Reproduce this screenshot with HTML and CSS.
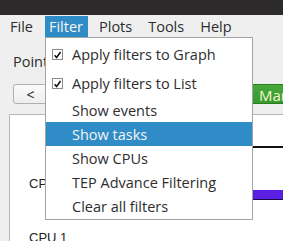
FILE: index.html
```html
<!DOCTYPE html>
<html lang="en">
<head>
    <meta charset="UTF-8">
    <meta name="viewport" content="width=device-width, initial-scale=1.0">
    <title>Trace Viewer</title>
    <link rel="stylesheet" href="styles.css">
</head>
<body>
    <div class="titlebar"></div>

    <nav class="menubar">
        <span class="menu-item">File</span>
        <span class="menu-item active">Filter</span>
        <span class="menu-item">Plots</span>
        <span class="menu-item">Tools</span>
        <span class="menu-item">Help</span>
    </nav>

    <main class="window">
        <div class="point-row">Pointer: none</div>

        <div class="button-row">
            <button class="btn btn-small">&lt;</button>
            <button class="btn">&gt;</button>
            <button class="btn btn-green">Marker A</button>
        </div>

        <div class="graph">
            <div class="axis"></div>
            <div class="lane">
                <span class="lane-label">CPU 0</span>
                <div class="lane-bar"></div>
            </div>
            <div class="lane">
                <span class="lane-label">CPU 1</span>
            </div>
        </div>
    </main>

    <!-- open Filter menu -->
    <ul class="dropdown">
        <li class="check-item">
            <span class="checkbox">
                <svg width="10" height="10" viewBox="0 0 10 10"><path d="M1.8 5.2 L4 7.8 L8.4 1.6" fill="none" stroke="#111" stroke-width="1.7"/></svg>
            </span>
            Apply filters to Graph
        </li>
        <li class="check-item">
            <span class="checkbox">
                <svg width="10" height="10" viewBox="0 0 10 10"><path d="M1.8 5.2 L4 7.8 L8.4 1.6" fill="none" stroke="#111" stroke-width="1.7"/></svg>
            </span>
            Apply filters to List
        </li>
        <li>Show events</li>
        <li class="selected">Show tasks</li>
        <li>Show CPUs</li>
        <li>TEP Advance Filtering</li>
        <li>Clear all filters</li>
    </ul>
</body>
</html>
```

FILE: styles.css
```css
body {
    margin: 0;
    width: 283px;
    height: 241px;
    overflow: hidden;
    position: relative;
    background: #efefef;
    font-family: "Open Sans", sans-serif;
    font-size: 14.5px;
    color: #2d2d2d;
}

.titlebar {
    height: 15px;
    background: #2c2a2a;
}

.menubar {
    display: flex;
    height: 24px;
    padding-left: 6px;
    gap: 7px;
}

.menu-item {
    display: flex;
    align-items: center;
    height: 21px;
    margin-top: 1px;
    padding: 0 5px 0 4px;
}

.menu-item.active {
    background: #308cc6;
    color: #f4f4f4;
}

.window {
    padding-left: 9px;
}

.point-row {
    height: 45px;
    display: flex;
    align-items: center;
    padding-left: 4px;
    white-space: nowrap;
}

.button-row {
    display: flex;
    gap: 6px;
    padding-left: 4px;
    margin-bottom: 10px;
    overflow: hidden;
}

.btn {
    flex-shrink: 0;
    height: 20px;
    width: 60px;
    padding: 0;
    border: 1px solid #b0b0b0;
    border-radius: 3px;
    background: linear-gradient(#fafafa, #eeeeee);
    font-family: "Open Sans", sans-serif;
    font-size: 14px;
    color: #222;
}

.btn-small {
    width: 35px;
}

.btn-green {
    width: 100px;
    margin-left: 129px;
    text-align: left;
    padding-left: 9px;
    font-size: 15px;
    background: linear-gradient(#46a83a, #369a2c);
    border-color: #2a7d22;
    color: #f6f4d2;
}

.graph {
    height: 130px;
    background: #ffffff;
    border-top: 1px solid #b8b8b8;
    border-left: 1px solid #b8b8b8;
    padding-left: 19px;
}

.axis {
    margin-top: 31px;
    margin-left: 60px;
    height: 2px;
    background: #111;
}

.lane {
    display: flex;
    align-items: center;
    height: 54px;
    position: relative;
}

.axis + .lane {
    margin-top: 8px;
}

.lane-label {
    font-family: "Liberation Sans", Arial, sans-serif;
    font-size: 13px;
    color: #222;
    width: 60px;
}

.lane-bar {
    position: absolute;
    left: 160px;
    right: -20px;
    bottom: 10px;
    height: 9px;
    background: #5a1fe3;
    border-bottom: 1px solid #1a0a40;
}

.dropdown {
    position: absolute;
    left: 45px;
    top: 37px;
    width: 206px;
    margin: 0;
    padding: 2px 0 1px;
    list-style: none;
    background: #ffffff;
    border: 1px solid #a4a4a4;
}

.dropdown li {
    display: flex;
    align-items: center;
    height: 24px;
    padding-left: 26px;
    white-space: nowrap;
}

.dropdown li.check-item {
    height: 29px;
    padding-left: 6px;
}

.dropdown li.selected {
    background: #308cc6;
    color: #f4f4f4;
}

.checkbox {
    box-sizing: border-box;
    width: 11px;
    height: 11px;
    margin-right: 9px;
    border: 1px solid #8c8c8c;
    background: #fff;
    display: flex;
    align-items: center;
    justify-content: center;
}
```
